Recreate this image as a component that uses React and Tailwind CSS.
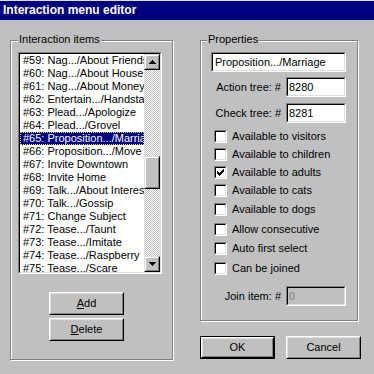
import React from "react";

const items = [
  "#59: Nag.../About Friends",
  "#60: Nag.../About House",
  "#61: Nag.../About Money",
  "#62: Entertain.../Handstand",
  "#63: Plead.../Apologize",
  "#64: Plead.../Grovel",
  "#65: Proposition.../Marriage",
  "#66: Proposition.../Move",
  "#67: Invite Downtown",
  "#68: Invite Home",
  "#69: Talk.../About Interests",
  "#70: Talk.../Gossip",
  "#71: Change Subject",
  "#72: Tease.../Taunt",
  "#73: Tease.../Imitate",
  "#74: Tease.../Raspberry",
  "#75: Tease.../Scare",
];

function Sunken({ className = "", innerClass = "", children }) {
  return (
    <div className={"border border-t-[#808080] border-l-[#808080] border-r-white border-b-white " + className}>
      <div className={"w-full h-full border border-t-black border-l-black border-r-[#dfdfdf] border-b-[#dfdfdf] " + innerClass}>
        {children}
      </div>
    </div>
  );
}

function Raised({ className = "", innerClass = "", children }) {
  return (
    <div className={"border border-t-white border-l-white border-r-black border-b-black " + className}>
      <div className={"w-full h-full border border-t-[#dfdfdf] border-l-[#dfdfdf] border-r-[#808080] border-b-[#808080] " + innerClass}>
        {children}
      </div>
    </div>
  );
}

function SbButton({ className = "", children }) {
  return (
    <div className={"border border-t-[#dfdfdf] border-l-[#dfdfdf] border-r-black border-b-black bg-[#c0c0c0] " + className}>
      <div className="w-full h-full border border-t-white border-l-white border-r-[#808080] border-b-[#808080] flex items-center justify-center">
        {children}
      </div>
    </div>
  );
}

function ArrowUp() {
  return (
    <svg width="7" height="4" viewBox="0 0 7 4" shapeRendering="crispEdges">
      <rect x="3" y="0" width="1" height="1" fill="#000" />
      <rect x="2" y="1" width="3" height="1" fill="#000" />
      <rect x="1" y="2" width="5" height="1" fill="#000" />
      <rect x="0" y="3" width="7" height="1" fill="#000" />
    </svg>
  );
}

function ArrowDown() {
  return (
    <svg width="7" height="4" viewBox="0 0 7 4" shapeRendering="crispEdges">
      <rect x="0" y="0" width="7" height="1" fill="#000" />
      <rect x="1" y="1" width="5" height="1" fill="#000" />
      <rect x="2" y="2" width="3" height="1" fill="#000" />
      <rect x="3" y="3" width="1" height="1" fill="#000" />
    </svg>
  );
}

function Check() {
  return (
    <svg width="7" height="7" viewBox="0 0 7 7" shapeRendering="crispEdges">
      <rect x="6" y="0" width="1" height="1" fill="#000" />
      <rect x="5" y="1" width="2" height="1" fill="#000" />
      <rect x="0" y="2" width="1" height="1" fill="#000" />
      <rect x="4" y="2" width="3" height="1" fill="#000" />
      <rect x="0" y="3" width="2" height="1" fill="#000" />
      <rect x="3" y="3" width="3" height="1" fill="#000" />
      <rect x="0" y="4" width="5" height="1" fill="#000" />
      <rect x="1" y="5" width="3" height="1" fill="#000" />
      <rect x="2" y="6" width="1" height="1" fill="#000" />
    </svg>
  );
}

function CheckRow({ label, checked, mt }) {
  return (
    <div className={"flex items-center h-[13px] ml-[13px] " + mt}>
      <Sunken className="w-[13px] h-[13px] shrink-0" innerClass="bg-white flex items-center justify-center">
        {checked ? <Check /> : null}
      </Sunken>
      <span className="ml-[5px] leading-[13px] whitespace-nowrap">{label}</span>
    </div>
  );
}

function PushButton({ children, className = "" }) {
  return (
    <Raised className={"w-[75px] h-[23px] " + className} innerClass="flex items-center justify-center bg-[#c0c0c0]">
      <span className="leading-[13px]">{children}</span>
    </Raised>
  );
}

export default function App() {
  return (
    <div className="w-[374px] h-[374px] bg-[#c0c0c0] overflow-hidden font-['Liberation_Sans',Arial,sans-serif] text-[11px] text-black border-t border-t-[#dfdfdf]">
      <div className="h-[19px] bg-[#000080] text-white font-bold pl-[3px] leading-[19px] text-[12px]">
        Interaction menu editor
      </div>
      <div className="flex pl-[10px] pt-[20px]">
        {/* Left group */}
        <div className="relative w-[163px] h-[320px] border border-[#808080] shadow-[inset_1px_1px_0_#fff,1px_1px_0_#fff] flex flex-col">
          <div className="absolute top-[-8px] left-[7px] px-[1px] bg-[#c0c0c0] leading-[13px] whitespace-nowrap">
            Interaction items
          </div>
          <Sunken className="ml-[7px] mt-[11px] w-[144px] h-[222px]" innerClass="bg-white flex overflow-hidden">
            <div className="w-[124px] h-full overflow-hidden">
              {items.map((it, i) => {
                const sel = i === 6;
                return (
                  <div
                    key={it}
                    className={
                      "h-[13px] leading-[11px] whitespace-nowrap overflow-hidden " +
                      (sel
                        ? "bg-[#000080] text-white border border-dotted border-[#e0e040] pl-[2px]"
                        : "pl-[3px] pt-[1px]")
                    }
                  >
                    {it}
                  </div>
                );
              })}
            </div>
            <div className="w-[16px] h-full flex flex-col">
              <SbButton className="w-[16px] h-[16px] shrink-0">
                <ArrowUp />
              </SbButton>
              <div className="flex-1 flex flex-col bg-[image:repeating-conic-gradient(#fff_0_25%,#c0c0c0_0_50%)] bg-[length:2px_2px]">
                <SbButton className="w-[16px] h-[33px] mt-[86px]" />
              </div>
              <SbButton className="w-[16px] h-[16px] shrink-0">
                <ArrowDown />
              </SbButton>
            </div>
          </Sunken>
          <div className="flex flex-col ml-[38px] mt-[18px] gap-[3px]">
            <PushButton>
              <span className="underline">A</span>dd
            </PushButton>
            <PushButton>
              <span className="underline">D</span>elete
            </PushButton>
          </div>
        </div>

        {/* Right column */}
        <div className="ml-[27px] flex flex-col">
          <div className="relative w-[158px] h-[281px] border border-[#808080] shadow-[inset_1px_1px_0_#fff,1px_1px_0_#fff] flex flex-col">
            <div className="absolute top-[-8px] left-[6px] px-[1px] bg-[#c0c0c0] leading-[13px] whitespace-nowrap">
              Properties
            </div>
            <Sunken className="ml-[10px] mt-[11px] w-[135px] h-[20px]" innerClass="bg-white flex items-center pl-[2px]">
              <span className="leading-[13px] whitespace-nowrap">Proposition.../Marriage</span>
            </Sunken>
            <div className="ml-[10px] w-[135px] mt-[5px] flex items-center justify-end">
              <span className="leading-[13px]">Action tree: #</span>
              <Sunken className="ml-[5px] w-[60px] h-[20px]" innerClass="bg-white flex items-center pl-[1px]">
                <span className="leading-[13px]">8280</span>
              </Sunken>
            </div>
            <div className="ml-[10px] w-[135px] mt-[6px] flex items-center justify-end">
              <span className="leading-[13px]">Check tree: #</span>
              <Sunken className="ml-[5px] w-[60px] h-[20px]" innerClass="bg-white flex items-center pl-[1px]">
                <span className="leading-[13px]">8281</span>
              </Sunken>
            </div>
            <CheckRow label="Available to visitors" mt="mt-[7px]" />
            <CheckRow label="Available to children" mt="mt-[5px]" />
            <CheckRow label="Available to adults" checked mt="mt-[5px]" />
            <CheckRow label="Available to cats" mt="mt-[5px]" />
            <CheckRow label="Available to dogs" mt="mt-[6px]" />
            <CheckRow label="Allow consecutive" mt="mt-[7px]" />
            <CheckRow label="Auto first select" mt="mt-[6px]" />
            <CheckRow label="Can be joined" mt="mt-[7px]" />
            <div className="ml-[10px] w-[135px] mt-[11px] flex items-center justify-end">
              <span className="leading-[13px]">Join item: #</span>
              <Sunken className="ml-[5px] w-[60px] h-[20px]" innerClass="bg-[#c0c0c0] flex items-center pl-[1px]">
                <span className="leading-[13px] text-[#808080]">0</span>
              </Sunken>
            </div>
          </div>
          <div className="flex mt-[15px] gap-[11px]">
            <div className="w-[75px] h-[23px] border border-black">
              <Raised className="w-full h-full" innerClass="flex items-center justify-center bg-[#c0c0c0]">
                <span className="leading-[13px]">OK</span>
              </Raised>
            </div>
            <PushButton>Cancel</PushButton>
          </div>
        </div>
      </div>
    </div>
  );
}
